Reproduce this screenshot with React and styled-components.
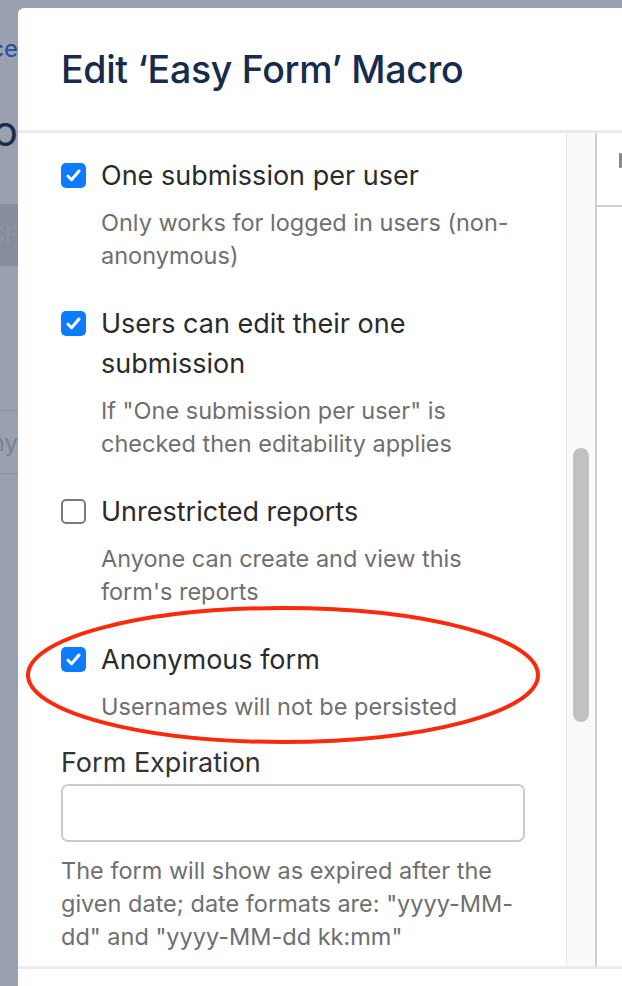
import React from "react";
import styled, { createGlobalStyle } from "styled-components";

const GlobalStyle = createGlobalStyle`
  html, body {
    margin: 0;
    padding: 0;
    background: #9aa0af;
    overflow: hidden;
  }
  * { box-sizing: border-box; }
`;

const font = `Inter, "Noto Sans", "Liberation Sans", sans-serif`;

const Page = styled.div`
  display: flex;
  width: 622px;
  height: 986px;
  overflow: hidden;
  font-family: ${font};
`;

/* what peeks out of the page behind the dialog */
const Behind = styled.div`
  width: 18px;
  flex: none;
  display: flex;
  flex-direction: column;
  overflow: hidden;
`;

const BehindRow = styled.div`
  display: flex;
  justify-content: flex-end;
  white-space: nowrap;
  height: ${(p) => p.$h}px;
  margin-top: ${(p) => p.$top || 0}px;
  align-items: center;
  font-size: ${(p) => p.$size}px;
  color: ${(p) => p.$color};
  background: ${(p) => p.$bg || "transparent"};
  border-top: ${(p) => (p.$lined ? "1px solid #8b919f" : "none")};
  border-bottom: ${(p) => (p.$lined ? "1px solid #8b919f" : "none")};
`;

const Modal = styled.div`
  flex: 1;
  margin-top: 8px;
  background: #fff;
  border-top-left-radius: 6px;
  display: flex;
  flex-direction: column;
  min-width: 0;
`;

const Header = styled.div`
  height: 125px;
  flex: none;
  display: flex;
  align-items: center;
  padding: 0 0 0 43px;
  border-bottom: 3px solid #ebecf0;
`;

const Title = styled.h1`
  margin: 0;
  font-size: 37.5px;
  font-weight: 500;
  letter-spacing: -0.3px;
  color: #172b4d;
  white-space: nowrap;
`;

const Body = styled.div`
  flex: 1;
  display: flex;
  min-height: 0;
`;

const Content = styled.div`
  position: relative;
  width: 548px;
  flex: none;
  padding: 23px 41px 0 43px;
  display: flex;
  flex-direction: column;
  overflow: hidden;
`;

const OptionList = styled.div`
  display: flex;
  flex-direction: column;
  gap: 32px;
  margin-bottom: 20px;
`;

const Option = styled.div`
  display: flex;
  flex-direction: column;
`;

const OptionLabel = styled.label`
  display: flex;
  align-items: flex-start;
  gap: 15px;
  font-size: 27px;
  line-height: 40px;
  color: #2b2b2b;
`;

const Box = styled.span`
  flex: none;
  width: 25px;
  height: 25px;
  margin-top: 7px;
  border-radius: 5px;
  display: flex;
  align-items: center;
  justify-content: center;
  background: ${(p) => (p.$checked ? "#0b7bff" : "#fff")};
  border: ${(p) => (p.$checked ? "none" : "2px solid #7a7a7a")};
`;

const Help = styled.div`
  padding-left: ${(p) => (p.$indent ? 40 : 0)}px;
  margin-top: ${(p) => p.$top || 0}px;
  font-size: 23.5px;
  line-height: 33px;
  color: #6f6f6f;
`;

const FieldLabel = styled.div`
  font-size: 27px;
  line-height: 40px;
  color: #333;
`;

const TextInput = styled.div`
  margin-top: 1px;
  height: 58px;
  flex: none;
  border: 2px solid #c7ccd4;
  border-radius: 7px;
  background: #fff;
`;

const Circle = styled.svg`
  position: absolute;
  left: 6px;
  top: 471px;
  pointer-events: none;
`;

const Track = styled.div`
  width: 31px;
  flex: none;
  background: #fafafa;
  border-left: 1px solid #e6e6e6;
  border-right: 2px solid #cfcfcf;
  display: flex;
  justify-content: center;
  padding-top: 315px;
`;

const Thumb = styled.div`
  width: 16px;
  height: 274px;
  border-radius: 8px;
  background: #c1c1c1;
`;

const Side = styled.div`
  flex: 1;
  display: flex;
  flex-direction: column;
`;

const SideHead = styled.div`
  height: 74px;
  border-bottom: 2px solid #d0d0d0;
  display: flex;
  justify-content: flex-end;
  padding-top: 20px;
`;

const SideMark = styled.div`
  width: 3px;
  height: 15px;
  background: #8a8a8a;
  border-radius: 1px;
`;

const Footer = styled.div`
  height: 20px;
  flex: none;
  border-top: 3px solid #ebecf0;
`;

const Check = () => (
  <svg width="15" height="13" viewBox="0 0 15 13">
    <path
      d="M2 7.2 L5.6 10.8 L13 2"
      fill="none"
      stroke="#fff"
      strokeWidth="3"
      strokeLinecap="round"
      strokeLinejoin="round"
    />
  </svg>
);

const options = [
  {
    label: "One submission per user",
    help: "Only works for logged in users (non-anonymous)",
    checked: true,
  },
  {
    label: "Users can edit their one submission",
    help: 'If "One submission per user" is checked then editability applies',
    checked: true,
  },
  {
    label: "Unrestricted reports",
    help: "Anyone can create and view this form's reports",
    checked: false,
  },
  {
    label: "Anonymous form",
    help: "Usernames will not be persisted",
    checked: true,
  },
];

export default function App() {
  return (
    <>
      <GlobalStyle />
      <Page>
        <Behind>
          <BehindRow $h={30} $top={33} $size={24} $color="#1d4fa8">
            Confluence
          </BehindRow>
          <BehindRow $h={40} $top={47} $size={42} $color="#1c2b4a">
            To
          </BehindRow>
          <BehindRow $h={62} $top={54} $size={22} $color="#8e94a2" $bg="#878d9b">
            SF
          </BehindRow>
          <BehindRow $h={64} $top={144} $size={24} $color="#7b8190" $lined>
            Any
          </BehindRow>
        </Behind>
        <Modal>
          <Header>
            <Title>Edit ‘Easy Form’ Macro</Title>
          </Header>
          <Body>
            <Content>
              <OptionList>
                {options.map((o) => (
                  <Option key={o.label}>
                    <OptionLabel>
                      <Box $checked={o.checked}>{o.checked && <Check />}</Box>
                      <span>{o.label}</span>
                    </OptionLabel>
                    <Help $indent $top={10}>
                      {o.help}
                    </Help>
                  </Option>
                ))}
              </OptionList>
              <FieldLabel>Form Expiration</FieldLabel>
              <TextInput />
              <Help $top={12}>
                The form will show as expired after the given date; date formats
                are: "yyyy-MM-dd" and "yyyy-MM-dd kk:mm"
              </Help>
              <Circle width="520" height="142" viewBox="0 0 520 142">
                <ellipse
                  cx="259"
                  cy="71"
                  rx="255"
                  ry="67"
                  fill="none"
                  stroke="#fb2a0c"
                  strokeWidth="4"
                />
              </Circle>
            </Content>
            <Track>
              <Thumb />
            </Track>
            <Side>
              <SideHead>
                <SideMark />
              </SideHead>
            </Side>
          </Body>
          <Footer />
        </Modal>
      </Page>
    </>
  );
}
